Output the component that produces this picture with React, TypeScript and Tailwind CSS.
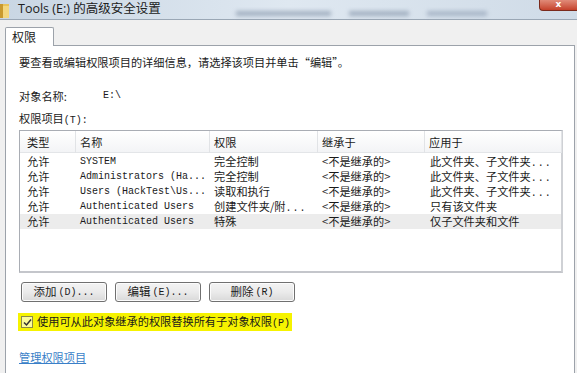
import React from "react";

const cjk = '"Noto Sans CJK SC", "Noto Sans", sans-serif';
const mono = '"Liberation Mono", "Noto Sans CJK SC", monospace';

const rows = [
  { name: "SYSTEM", perm: "完全控制", applies: "此文件夹、子文件夹", more: true },
  { name: "Administrators (Ha...", perm: "完全控制", applies: "此文件夹、子文件夹", more: true },
  { name: "Users (HackTest\\Us...", perm: "读取和执行", applies: "此文件夹、子文件夹", more: true },
  { name: "Authenticated Users", perm: "创建文件夹/附", permMore: true, applies: "只有该文件夹" },
  { name: "Authenticated Users", perm: "特殊", applies: "仅子文件夹和文件", selected: true },
];

function Dots() {
  return <span className="text-[10px] tracking-[1px]" style={{ fontFamily: mono }}>...</span>;
}

function WinButton({ label, hotkey, dots }: { label: string; hotkey: string; dots?: boolean }) {
  return (
    <button className="w-[86px] h-[20px] rounded-[3px] border border-[#707070] bg-gradient-to-b from-[#f3f3f3] via-[#ebebeb] to-[#d9d9d9] flex items-center justify-center gap-[2px] text-[11.5px] text-[#1a1a1a] shadow-[inset_0_0_0_1px_#fcfcfc]">
      <span>{label}</span>
      <span className="text-[10px]" style={{ fontFamily: mono }}>
        ({hotkey}){dots ? "..." : ""}
      </span>
    </button>
  );
}

function FolderIcon() {
  return (
    <svg width="10" height="16" viewBox="0 0 10 16">
      <rect x="0" y="2" width="9" height="14" fill="#e8c35a" />
      <rect x="0" y="2" width="3" height="14" fill="#c99a2e" />
      <rect x="3" y="4" width="6" height="12" fill="#f3d77e" />
    </svg>
  );
}

export default function App() {
  return (
    <div
      className="w-[577px] h-[373px] overflow-hidden bg-[#f0f0f0] flex flex-col text-[#1a1a1a]"
      style={{ fontFamily: cjk }}
    >
      {/* title bar */}
      <div className="h-[20px] shrink-0 flex items-start bg-gradient-to-r from-[#c9d6e3] via-[#dfe8f1] to-[#cfdbe7] border-b border-[#9aa7b5] relative">
        <div className="pt-[2px]">
          <FolderIcon />
        </div>
        <span
          className="ml-[8px] mt-[1px] text-[12.5px] leading-[16px] text-[#202020]"
          style={{ fontFamily: '"Open Sans", "Noto Sans CJK SC", sans-serif' }}
        >
          Tools (E:) 的高级安全设置
        </span>
        <div className="flex-1 flex items-end gap-[18px] h-full pb-[3px] pl-[75px] opacity-60">
          <div className="w-[95px] h-[5px] bg-[#7d8ea3] blur-[2px]" />
          <div className="w-[60px] h-[5px] bg-[#7d8ea3] blur-[2px]" />
          <div className="w-[60px] h-[5px] bg-[#8a9ab0] blur-[2px]" />
        </div>
        <div className="absolute right-0 top-0 w-[38px] h-[11px] rounded-bl-[4px] bg-gradient-to-b from-[#e08a78] to-[#c4402a] border-l border-b border-[#7a2a1c] flex justify-center">
          <span className="text-white text-[9px] leading-[8px] font-bold" style={{ fontFamily: '"DejaVu Sans", sans-serif' }}>x</span>
        </div>
      </div>

      <div className="flex-1 flex flex-col pl-[5px] pr-[2px] pt-[7px]">
        {/* tab */}
        <div className="flex">
          <div className="w-[49px] h-[19px] bg-white border border-b-0 border-[#9ca2aa] rounded-t-[2px] text-[12px] leading-[17px] pl-[6px] -mb-px relative z-10">
            权限
          </div>
        </div>

        {/* panel */}
        <div className="flex-1 bg-white border border-[#9ca2aa] border-b-0 pl-[13px] pr-[11px] pt-[8px] text-[11.2px]">
          <div className="h-[16px] leading-[16px]">要查看或编辑权限项目的详细信息，请选择该项目并单击“编辑”。</div>

          <div className="mt-[18px] h-[16px] leading-[16px] flex">
            <span className="w-[84px]">对象名称:</span>
            <span className="text-[10px]" style={{ fontFamily: mono }}>E:\</span>
          </div>

          <div className="mt-[6px] h-[16px] leading-[16px]">
            权限项目<span className="text-[10px]" style={{ fontFamily: mono }}>(T):</span>
          </div>

          {/* list */}
          <div className="mt-[4px] h-[143px] border border-[#a9adb4] border-b-2 border-b-[#c4c6cb] border-r-2 border-r-[#cfd1d5]">
            <div className="grid grid-cols-[56px_134px_108px_107px_137px] h-[22px] bg-gradient-to-b from-white to-[#f3f4f6] border-b border-[#e3e5e8]">
              {["类型", "名称", "权限", "继承于", "应用于"].map((h, i) => (
                <div
                  key={h}
                  className={`leading-[22px] border-r border-[#e1e3e6] ${i === 0 ? "pl-[7px]" : "pl-[4px]"}`}
                >
                  {h}
                </div>
              ))}
            </div>
            <div className="pt-[1px]">
              {rows.map((r, i) => (
                <div
                  key={i}
                  className={`grid grid-cols-[56px_134px_108px_107px_137px] h-[15px] leading-[15px] ${
                    r.selected ? "bg-[#ececec]" : ""
                  }`}
                >
                  <div className="pl-[7px]">允许</div>
                  <div className="pl-[4px] text-[10px] whitespace-pre" style={{ fontFamily: mono }}>
                    {r.name}
                  </div>
                  <div className="pl-[4px] whitespace-nowrap overflow-hidden">
                    {r.perm}
                    {r.permMore && <Dots />}
                  </div>
                  <div className="pl-[4px] whitespace-nowrap">
                    <span className="text-[#333]">&lt;</span>不是继承的<span className="text-[#333]">&gt;</span>
                  </div>
                  <div className="pl-[5px] whitespace-nowrap">
                    {r.applies}
                    {r.more && <Dots />}
                  </div>
                </div>
              ))}
            </div>
          </div>

          {/* buttons */}
          <div className="mt-[9px] pl-[2px] flex gap-[8px]">
            <WinButton label="添加" hotkey="D" dots />
            <WinButton label="编辑" hotkey="E" dots />
            <WinButton label="删除" hotkey="R" />
          </div>

          {/* checkbox */}
          <div className="mt-[11px] -ml-[1px] w-[274px] h-[18px] bg-[#f6f300] flex items-center pl-[3px] gap-[4px] whitespace-nowrap">
            <div className="shrink-0 w-[12px] h-[12px] border border-[#8a8a4a] bg-[#fbfb9a] flex items-center justify-center">
              <svg width="9" height="9" viewBox="0 0 9 9">
                <path d="M1 4.5 L3.5 7 L8 1.5" stroke="#333" strokeWidth="1.5" fill="none" />
              </svg>
            </div>
            <span className="leading-[16px]">
              使用可从此对象继承的权限替换所有子对象权限
              <span className="text-[10px]" style={{ fontFamily: mono }}>(P)</span>
            </span>
          </div>

          {/* link */}
          <div className="mt-[18px]">
            <a className="text-[#3a7fc8] underline leading-[16px]">管理权限项目</a>
          </div>
        </div>
      </div>
    </div>
  );
}
